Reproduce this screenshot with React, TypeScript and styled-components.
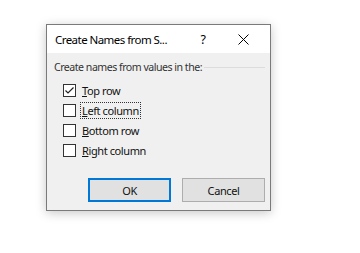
import React from 'react';
import styled, { createGlobalStyle } from 'styled-components';

const GlobalStyle = createGlobalStyle`
  html, body {
    margin: 0;
    padding: 0;
    background: #ffffff;
  }
  body {
    font-family: 'Noto Sans', 'Open Sans', sans-serif;
  }
`;

const Page = styled.div`
  width: 360px;
  height: 253px;
  padding: 24px 0 0 46px;
  box-sizing: border-box;
`;

const Dialog = styled.div`
  width: 225px;
  height: 187px;
  box-sizing: border-box;
  border: 1px solid #7a7a7a;
  background: #f0f0f0;
  box-shadow: 0 2px 10px rgba(0, 0, 0, 0.22);
  display: flex;
  flex-direction: column;
`;

const TitleBar = styled.div`
  height: 28px;
  background: #ffffff;
  display: flex;
  align-items: center;
  padding: 0 7px 0 8px;
  font-size: 11.5px;
  letter-spacing: -0.55px;
  color: #000;
`;

const Title = styled.span`
  flex: 1;
  white-space: nowrap;
`;

const TitleButton = styled.span`
  width: 40px;
  display: flex;
  justify-content: center;
  align-items: center;
  font-size: 12.5px;
`;

const Body = styled.div`
  flex: 1;
  display: flex;
  flex-direction: column;
  padding: 7px 5px 0 7px;
`;

const GroupHead = styled.div`
  display: flex;
  align-items: center;
  gap: 2px;
  font-size: 10.6px;
  letter-spacing: -0.5px;
  color: #333;
`;

const GroupLine = styled.div`
  flex: 1;
  height: 1px;
  background: #dcdcdc;
`;

const Options = styled.div`
  display: flex;
  flex-direction: column;
  gap: 6.3px;
  padding: 9px 0 0 9px;
`;

const Option = styled.label`
  display: flex;
  align-items: center;
  gap: 5px;
  font-size: 11px;
  letter-spacing: -0.4px;
  color: #111;
  height: 14px;
`;

const Box = styled.span`
  width: 13px;
  height: 13px;
  box-sizing: border-box;
  border: 1px solid #333;
  background: #fff;
  display: flex;
  align-items: center;
  justify-content: center;
`;

const Label = styled.span<{ $focus?: boolean }>`
  padding: 0 1px;
  outline: ${({ $focus }) => ($focus ? '1px dotted #333' : 'none')};
  line-height: 15px;
`;

const Key = styled.span`
  text-decoration: underline;
`;

const Buttons = styled.div`
  display: flex;
  justify-content: flex-end;
  gap: 11px;
  margin-top: auto;
  padding: 0 0 8px 0;
`;

const Button = styled.button<{ $primary?: boolean }>`
  width: 83px;
  height: 24px;
  box-sizing: border-box;
  background: #e1e1e1;
  border: ${({ $primary }) => ($primary ? '2px solid #0078d7' : '1px solid #adadad')};
  font-family: inherit;
  font-size: 11px;
  letter-spacing: -0.4px;
  color: #111;
  padding: 0;
`;

function Check({ on }: { on?: boolean }) {
  return (
    <Box>
      {on && (
        <svg width="11" height="11" viewBox="0 0 11 11">
          <path d="M1.5 5.5 L4 8 L9.5 2.5" fill="none" stroke="#222" strokeWidth="1.2" />
        </svg>
      )}
    </Box>
  );
}

export default function App() {
  return (
    <Page>
      <GlobalStyle />
      <Dialog>
        <TitleBar>
          <Title>Create Names from S...</Title>
          <TitleButton>?</TitleButton>
          <TitleButton>
            <svg width="11" height="11" viewBox="0 0 11 11">
              <path d="M0.5 0.5 L10.5 10.5 M10.5 0.5 L0.5 10.5" stroke="#000" strokeWidth="1" />
            </svg>
          </TitleButton>
        </TitleBar>
        <Body>
          <GroupHead>
            <span>Create names from values in the:</span>
            <GroupLine />
          </GroupHead>
          <Options>
            <Option>
              <Check on />
              <Label><Key>T</Key>op row</Label>
            </Option>
            <Option>
              <Check />
              <Label $focus><Key>L</Key>eft column</Label>
            </Option>
            <Option>
              <Check />
              <Label><Key>B</Key>ottom row</Label>
            </Option>
            <Option>
              <Check />
              <Label><Key>R</Key>ight column</Label>
            </Option>
          </Options>
          <Buttons>
            <Button $primary>OK</Button>
            <Button>Cancel</Button>
          </Buttons>
        </Body>
      </Dialog>
    </Page>
  );
}
